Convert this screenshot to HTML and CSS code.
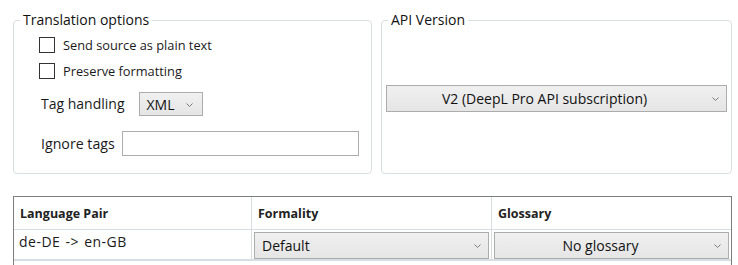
FILE: index.html
```html
<!DOCTYPE html>
<html>
<head>
<meta charset="utf-8">
<link rel="stylesheet" href="styles.css">
</head>
<body>
<div class="page">
  <div class="groups">
    <div class="group group-options">
      <span class="legend">Translation options</span>
      <label class="check"><span class="box"></span><span>Send source as plain text</span></label>
      <label class="check check-2"><span class="box"></span><span>Preserve formatting</span></label>
      <div class="field field-tag">
        <span class="label">Tag handling</span>
        <div class="combo combo-xml"><span class="combo-text">XML</span><svg class="chev" width="7" height="4" viewBox="0 0 7 4"><polyline points="0.5,0.5 3.5,3.5 6.5,0.5" fill="none" stroke="#7a7a7a" stroke-width="1"/></svg></div>
      </div>
      <div class="field field-ignore">
        <span class="label">Ignore tags</span>
        <div class="textbox"></div>
      </div>
    </div>
    <div class="group group-api">
      <span class="legend">API Version</span>
      <div class="combo combo-api"><span class="combo-text center">V2 (DeepL Pro API subscription)</span><svg class="chev" width="7" height="4" viewBox="0 0 7 4"><polyline points="0.5,0.5 3.5,3.5 6.5,0.5" fill="none" stroke="#7a7a7a" stroke-width="1"/></svg></div>
    </div>
  </div>
  <div class="grid">
    <div class="row head">
      <div class="cell c1">Language Pair</div>
      <div class="cell c2">Formality</div>
      <div class="cell c3">Glossary</div>
    </div>
    <div class="row body">
      <div class="cell c1 plain">de-DE -&gt; en-GB</div>
      <div class="cell c2 wrap"><div class="combo combo-cell"><span class="combo-text">Default</span><svg class="chev" width="7" height="4" viewBox="0 0 7 4"><polyline points="0.5,0.5 3.5,3.5 6.5,0.5" fill="none" stroke="#7a7a7a" stroke-width="1"/></svg></div></div>
      <div class="cell c3 wrap"><div class="combo combo-cell combo-gloss"><span class="combo-text center">No glossary</span><svg class="chev" width="7" height="4" viewBox="0 0 7 4"><polyline points="0.5,0.5 3.5,3.5 6.5,0.5" fill="none" stroke="#7a7a7a" stroke-width="1"/></svg></div></div>
    </div>
    <div class="row empty"></div>
  </div>
</div>
</body>
</html>
```

FILE: styles.css
```css
html, body {
  margin: 0;
  padding: 0;
  background: #ffffff;
}
body {
  font-family: "Open Sans", "Noto Sans", sans-serif;
  color: #1a1a1a;
  width: 738px;
  height: 265px;
  overflow: hidden;
}
.page {
  padding: 20px 0 0 13px;
}
.groups {
  display: flex;
  gap: 9px;
}
.group {
  position: relative;
  box-sizing: border-box;
  height: 154px;
  border: 1px solid #dadee3;
  border-radius: 4px;
}
.group-options {
  width: 359px;
  padding: 16px 0 0 25px;
}
.group-api {
  width: 351px;
  padding: 64px 0 0 4px;
}
.legend {
  position: absolute;
  top: -11px;
  left: 6px;
  padding: 0 3px;
  background: #ffffff;
  font-size: 14px;
  line-height: 20px;
  color: #111;
}
.check {
  display: flex;
  align-items: center;
  gap: 8px;
  height: 16px;
  font-size: 12.8px;
}
.check-2 {
  margin-top: 10px;
}
.box {
  box-sizing: border-box;
  width: 16px;
  height: 16px;
  border: 1px solid #333333;
  background: #fff;
}
.field {
  display: flex;
  align-items: center;
  font-size: 14px;
}
.field-tag {
  margin-top: 13px;
  margin-left: 2px;
  gap: 14px;
}
.field-ignore {
  margin-top: 15px;
  margin-left: 2px;
  gap: 7px;
}
.field-ignore .label {
  font-size: 14.2px;
}
.label {
  line-height: 20px;
}
.combo {
  box-sizing: border-box;
  display: flex;
  align-items: center;
  border: 1px solid #acacac;
  background: linear-gradient(#f0f0f0, #e5e5e5);
  font-size: 14px;
  color: #111;
}
.combo-text {
  flex: 1;
  line-height: 20px;
}
.combo-text.center {
  text-align: center;
}
.chev {
  flex: none;
}
.combo-xml {
  width: 64px;
  height: 24px;
  padding: 2px 9px 0 7px;
}
.combo-api {
  width: 341px;
  height: 27px;
  padding: 0 7px 0 0;
}
.combo-api .combo-text {
  padding-right: 10px;
}
.textbox {
  box-sizing: border-box;
  width: 237px;
  height: 25px;
  border: 1px solid #abadb3;
  background: #fff;
}
.grid {
  box-sizing: border-box;
  margin-top: 22px;
  width: 719px;
  height: 80px;
  border: 1px solid #7d7d7d;
  border-bottom: none;
}
.row {
  display: flex;
  border-bottom: 1px solid #d6dde3;
}
.head {
  height: 32px;
}
.body {
  height: 29px;
}
.cell {
  box-sizing: border-box;
  display: flex;
  align-items: center;
  border-right: 1px solid #d6dde3;
}
.c1 { width: 238px; }
.c2 { width: 240px; }
.c3 { width: 239px; border-right: none; }
.head .cell {
  font-weight: 700;
  font-size: 12.5px;
  padding-left: 6px;
  color: #222;
}
.plain {
  font-size: 14px;
  letter-spacing: 0.5px;
  word-spacing: 1px;
  padding-left: 5px;
  align-items: flex-start;
  padding-top: 2px;
}
.wrap {
  padding: 1px 2px 0 2px;
}
.combo-cell {
  width: 100%;
  height: 27px;
  padding: 2px 7px 0 7px;
}
.combo-gloss {
  padding-left: 0;
}
.combo-gloss .combo-text {
  padding-right: 8px;
}
```
